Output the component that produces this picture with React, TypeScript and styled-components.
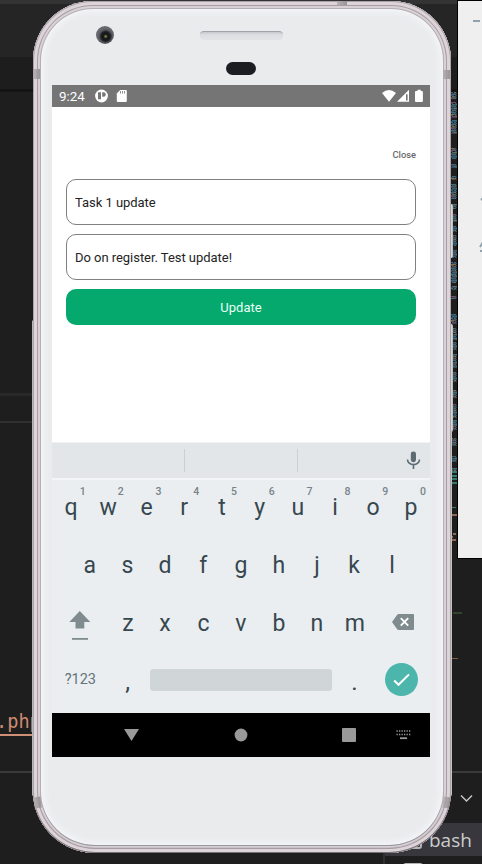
import React from "react";
import styled, { createGlobalStyle } from "styled-components";

const GlobalStyle = createGlobalStyle`
  *, *::before, *::after { box-sizing: border-box; }
  body { margin: 0; background: #1e1e1e; }
  button { border: 0; padding: 0; background: none; font: inherit; color: inherit; }
`;

/* ---------- Desktop behind the emulator ---------- */

const Desktop = styled.div`
  position: relative;
  width: 482px;
  height: 864px;
  overflow: hidden;
  background: #1e1e1e;
  font-family: Roboto, "Noto Sans", sans-serif;
`;

const Band = styled.div<{ $h: number; $c: string }>`
  height: ${(p) => p.$h}px;
  background: ${(p) => p.$c};
`;

const EditorFragment = styled.div`
  position: absolute;
  left: -4px;
  top: 707px;
  width: 60px;
  height: 29px;
  border-bottom: 2px solid #ce9178;
  color: #ce8b70;
  font: 18.6px/29px "DejaVu Sans Mono", "Liberation Mono", monospace;
`;

const CodeOverview = styled.svg`
  position: absolute;
  left: 450px;
  top: 92px;
`;

const SideWindow = styled.div`
  position: absolute;
  left: 457px;
  top: 0;
  width: 30px;
  height: 559px;
  border: solid #000;
  border-width: 1px 1px 1px 1px;
  background: #efefef;
`;

const Terminal = styled.div`
  position: absolute;
  left: 383px;
  top: 773px;
  width: 99px;
  height: 91px;
  border-left: 2px solid #303031;
  display: flex;
  flex-direction: column;
  color: #cccccc;
`;

const TerminalHead = styled.div`
  height: 50px;
  flex: none;
  padding: 16px 9px 0;
  display: flex;
  justify-content: flex-end;
`;

const TerminalTab = styled.div<{ $active?: boolean }>`
  height: 33px;
  flex: none;
  padding-left: 18px;
  display: flex;
  align-items: center;
  gap: 7px;
  background: ${(p) => (p.$active ? "#37373d" : "transparent")};
  font: 19px "Open Sans", "Noto Sans", sans-serif;
`;

const ShellIcon = styled.span`
  width: 19px;
  height: 19px;
  border: 2px solid #b4b4b4;
  border-radius: 3px;
`;

/* ---------- Phone ---------- */

const Phone = styled.div`
  position: absolute;
  left: 33px;
  top: 1px;
  width: 418px;
  height: 852px;
  padding: 84px 21px 96px 19px;
  border-radius: 60px 60px 62px 62px;
  background: #eaebed;
  box-shadow:
    inset 0 -1px 0 #777075,
    inset 0 0 0 1px #aaa2a7,
    inset 0 0 0 4px #ddd4d9,
    inset 0 -3px 0 2px #a69ca1,
    inset 0 0 0 5px #a79ea3,
    inset 0 -1px 0 5px #c9c1c6,
    inset 0 0 0 7px #d9d1d6,
    inset 0 -1px 0 7px #96979c,
    inset 0 0 0 8px #b4afb4,
    inset 0 0 7px 10px #f6f7f9;
`;

const SideButton = styled.div<{ $x: number; $y: number; $w: number; $h: number }>`
  position: absolute;
  left: ${(p) => p.$x}px;
  top: ${(p) => p.$y}px;
  width: ${(p) => p.$w}px;
  height: ${(p) => p.$h}px;
  border-radius: 2px;
  background: linear-gradient(90deg, #a5a5a5, #dfdfdc 50%, #b4b4b2);
`;

const Antenna = styled.div<{ $x: number; $y: number; $w: number; $h: number; $r?: number }>`
  position: absolute;
  left: ${(p) => p.$x}px;
  top: ${(p) => p.$y}px;
  width: ${(p) => p.$w}px;
  height: ${(p) => p.$h}px;
  transform: rotate(${(p) => p.$r ?? 0}deg);
  background: linear-gradient(90deg, #b2abae, #8f898c);
  opacity: 0.85;
`;

const Camera = styled.div`
  position: absolute;
  left: 96px;
  top: 26px;
  width: 18px;
  height: 18px;
  border-radius: 50%;
  background: radial-gradient(circle at 54% 58%, #706b32 0 1px, #17191d 2px 4px, #25272d 5px, #55575c 6.5px, #66686d 8px);
`;

const Speaker = styled.div`
  position: absolute;
  left: 200px;
  top: 31px;
  width: 83px;
  height: 9px;
  border-radius: 4px;
  border-top: 1px solid #a0a3aa;
  background: linear-gradient(#c6c8cf, #dddee2 35%, #e2e3e7);
`;

const Sensor = styled.div`
  position: absolute;
  left: 226px;
  top: 62px;
  width: 30px;
  height: 13px;
  border-radius: 7px;
  background: #1b1d22;
`;

const Screen = styled.div`
  width: 378px;
  height: 672px;
  display: flex;
  flex-direction: column;
  background: #fff;
`;

const StatusBar = styled.header`
  height: 22px;
  flex: none;
  padding: 0 7px;
  display: flex;
  align-items: center;
  background: #757575;
  color: #fff;
  font-size: 13.4px;
`;

const StatusIcons = styled.div<{ $right?: boolean }>`
  display: flex;
  align-items: center;
  margin-left: ${(p) => (p.$right ? "auto" : "10px")};
`;

const Form = styled.main`
  flex: 1;
  padding: 42px 14px 0;
  display: flex;
  flex-direction: column;
`;

const CloseLink = styled.button`
  align-self: flex-end;
  height: 12px;
  margin-bottom: 18px;
  color: #68686a;
  font-size: 9.3px;
  font-weight: 500;
  line-height: 12px;
`;

const Field = styled.div`
  height: 46px;
  margin-bottom: 9px;
  padding: 0 8px;
  border: 1px solid #808080;
  border-radius: 10px;
  color: #242424;
  font-size: 13px;
  letter-spacing: -0.04px;
  line-height: 45px;
`;

const Submit = styled.button`
  height: 36px;
  border-radius: 10px;
  background: #05a96e;
  color: #e9fff5;
  font-size: 13px;
`;

/* ---------- Keyboard ---------- */

const Keyboard = styled.section`
  height: 271px;
  flex: none;
  border-top: 1px solid #f0f1f2;
  background: #eaeef1;
  color: #37474f;
`;

const Suggestions = styled.div`
  height: 37px;
  padding: 6px 0;
  display: grid;
  grid-template-columns: 133px 113px 1fr;
  background: #e2e6e9;
  border-bottom: 2px solid #f2f4f5;
`;

const Suggestion = styled.div`
  border-right: 1px solid #cbd0d3;
  height: 23px;
`;

const MicSlot = styled.div`
  display: flex;
  justify-content: flex-end;
  align-items: center;
  padding: 0 9px 2px 0;
`;

const KeyRow = styled.div<{ $inset?: number }>`
  height: 57.8px;
  display: flex;
  padding: 0 ${(p) => p.$inset ?? 0}px;
`;

const Key = styled.button<{ $w?: number; $size?: number; $color?: string; $drop?: number }>`
  position: relative;
  width: ${(p) => p.$w ?? 37.8}px;
  height: 53px;
  display: flex;
  align-items: center;
  justify-content: center;
  padding-top: ${(p) => p.$drop ?? 0}px;
  font-size: ${(p) => p.$size ?? 24.5}px;
  color: ${(p) => p.$color ?? "inherit"};
`;

const Letter = styled.span`
  transform: scaleX(0.94);
`;

const Hint = styled.sup`
  position: absolute;
  right: 4px;
  top: 5px;
  color: #78848a;
  font-size: 10.5px;
  font-weight: 500;
  line-height: 13px;
`;

const SpaceBar = styled.span`
  width: 182px;
  height: 22px;
  border-radius: 3px;
  background: #d0d5d8;
`;

const Confirm = styled.span`
  width: 33px;
  height: 33px;
  border-radius: 50%;
  display: grid;
  place-items: center;
  background: #4db6ac;
`;

const NavBar = styled.nav`
  height: 44px;
  flex: none;
  padding-left: 71px;
  display: grid;
  grid-template-columns: 111px 108px 54px 1fr;
  align-items: center;
  background: #000;
`;

const codeColors = ["#3c6b84", "#466c86", "#77764f", "#724c70", "#35777c", "#4c5b69", "#2f6a82"];

/* [first line, line count] of each block of code, in pixels */
const codeBlocks = [
  [0, 7], [10, 16], [28, 14], [56, 11], [72, 4], [84, 4], [92, 15], [112, 5],
  [122, 8], [134, 6], [143, 11], [158, 8], [170, 14], [182, 9], [194, 4],
  [204, 3], [222, 10], [236, 12], [250, 8], [262, 14], [280, 10], [298, 8],
  [312, 14], [328, 10], [346, 8], [364, 6], [376, 5],
];

const CodeMap = () => (
  <CodeOverview width="7" height="460" shapeRendering="crispEdges">
    {codeBlocks.flatMap(([start, count], b) =>
      Array.from({ length: count }, (_, i) => (
        <g key={`${b}-${i}`} opacity={i % 2 ? 0.6 : 0.95}>
          <rect x={(i * 5 + b) % 3} y={start + i} width={3 + ((i * 3 + b) % 4)} height="1" fill={codeColors[(b * 3 + (i >> 1)) % 7]} />
          <rect x={4 + (i % 2)} y={start + i} width="2" height="1" fill={codeColors[(i + b + 2) % 7]} />
        </g>
      )),
    )}
    <path d="M0 380h7M1 384h6M0 387h7M1 391h6" stroke="#347b72" strokeWidth="2" />
    <path d="M1 415h5" stroke="#347b72" />
    <path d="M1 423h6M1 445h2M3 442h3M1 448h5" stroke="#916956" strokeWidth="1.4" />
  </CodeOverview>
);

const StrayCode = styled.svg`
  position: absolute;
  left: 450px;
  top: 605px;
`;

const topRow = "qwertyuiop".split("");
const middleRow = "asdfghjkl".split("");
const bottomRow = "zxcvbnm".split("");

export default function App() {
  return (
    <>
      <GlobalStyle />
      <Desktop>
        <Band $h={4} $c="#333333" />
        <Band $h={53} $c="#252526" />
        <Band $h={32} $c="#1d1d1d" />
        <Band $h={3} $c="#141414" />
        <Band $h={301} $c="#1e1e1e" />
        <Band $h={3} $c="#29292a" />
        <Band $h={25} $c="#1e1e1e" />
        <Band $h={2} $c="#303031" />
        <Band $h={348} $c="#1e1e1e" />
        <Band $h={2} $c="#3a3a3a" />
        <EditorFragment>.php</EditorFragment>
        <CodeMap />
        <StrayCode width="14" height="60">
          <path d="M3 8h9" stroke="#466a3c" />
          <path d="M1 53.5h7" stroke="#845945" />
          <path d="M1 22l1 1M1 36l1 1" stroke="#666" />
        </StrayCode>
        <SideWindow>
          <svg width="24" height="556" fill="none" stroke="#90a2ad" strokeWidth="2">
            <path d="M15 20h7" />
            <path d="M23 199l2-2M22 246l3-5M22 250h3" />
          </svg>
        </SideWindow>
        <Terminal>
          <TerminalHead>
            <svg width="13" height="20" fill="none" stroke="#c5c5c5" strokeWidth="1.5">
              <path d="M1 6.5l5.5 5.5L12 6.5" />
            </svg>
          </TerminalHead>
          <TerminalTab $active>
            <ShellIcon />
            bash
          </TerminalTab>
          <TerminalTab>
            <svg width="22" height="20" fill="none" stroke="#b4b4b4" strokeWidth="2">
              <rect x="1" y="1" width="18" height="20" rx="2" />
            </svg>
          </TerminalTab>
        </Terminal>

        <SideButton $x={449} $y={204} $w={4} $h={54} />
        <SideButton $x={449} $y={324} $w={4} $h={108} />
        <SideButton $x={32} $y={320} $w={3} $h={476} />
        <SideButton $x={449} $y={430} $w={2.5} $h={366} />

        <Phone>
          <Screen>
            <StatusBar>
              9:24
              <StatusIcons>
                <svg width="33" height="14" viewBox="0 0 33 14">
                  <circle cx="6.5" cy="7" r="6.4" fill="#fff" />
                  <path d="M3 3.2h3v7H3zM7.2 3.2h1.3a2.2 2.2 0 0 1 0 4.6H7.2z" fill="#757575" />
                  <path d="M25.2 1h5.6q1 0 1 1v10q0 1-1 1h-8q-1 0-1-1V4.4z" fill="#fff" />
                  <path d="M25.5 2v2.6M27.5 2v2.6M29.5 2v2.6" stroke="#757575" strokeWidth="0.8" />
                </svg>
              </StatusIcons>
              <StatusIcons $right>
                <svg width="41" height="14" viewBox="0 0 41 14">
                  <path d="M0 4Q7-1.8 14 4L7 12.8z" fill="#fff" />
                  <path d="M27 .8V12.8H15z" fill="#fff" />
                  <path d="M24 5.2h1.6v6.2H24z" fill="#757575" />
                  <path d="M35.5.7h3.3V2h1.1q1 0 1 1v9q0 1-1 1H34q-1 0-1-1V3q0-1 1-1h1.5z" fill="#fff" />
                </svg>
              </StatusIcons>
            </StatusBar>

            <Form>
              <CloseLink>Close</CloseLink>
              <Field>Task 1 update</Field>
              <Field>Do on register. Test update!</Field>
              <Submit>Update</Submit>
            </Form>

            <Keyboard>
              <Suggestions>
                <Suggestion />
                <Suggestion />
                <MicSlot>
                  <svg width="15" height="18" viewBox="0 0 15 18" fill="none" stroke="#5c6b72">
                    <rect x="4.8" y="0.6" width="5.2" height="10.6" rx="2.4" fill="#5c6b72" stroke="none" />
                    <path d="M1.5 8.4a6 5.2 0 0 0 12 0M7.5 13.8V18" strokeWidth="1.6" />
                  </svg>
                </MicSlot>
              </Suggestions>
              <KeyRow>
                {topRow.map((k, i) => (
                  <Key key={k}>
                    <Letter>{k}</Letter>
                    <Hint>{(i + 1) % 10}</Hint>
                  </Key>
                ))}
              </KeyRow>
              <KeyRow $inset={18.9}>
                {middleRow.map((k) => (
                  <Key key={k} $drop={1}><Letter>{k}</Letter></Key>
                ))}
              </KeyRow>
              <KeyRow>
                <Key $w={56.7} $drop={7} aria-label="Shift">
                  <svg width="26" height="34" viewBox="0 0 26 34" fill="#7f8b8f">
                    <path d="M12.8 2L23.3 13H17.3V19.5H8.5V13H2.3z" />
                    <path d="M5 29h16v1.8H5z" />
                  </svg>
                </Key>
                {bottomRow.map((k) => (
                  <Key key={k} $drop={1}><Letter>{k}</Letter></Key>
                ))}
                <Key $w={56.7} aria-label="Backspace">
                  <svg width="25" height="16" viewBox="-3 0 25 16">
                    <path d="M6.5 0H21q1 0 1 1v14q0 1-1 1H6.5Q5.7 16 5 15L0 8 5 1q.7-1 1.5-1z" fill="#7f8b8f" />
                    <path d="M8.8 4.2l7.4 7.4m0-7.4l-7.4 7.4" stroke="#fff" strokeWidth="1.9" />
                  </svg>
                </Key>
              </KeyRow>
              <KeyRow>
                <Key $w={56.7} $size={14.5} $color="#64737a">?123</Key>
                <Key $drop={4}>,</Key>
                <Key $w={189} aria-label="Space"><SpaceBar /></Key>
                <Key $drop={4}>.</Key>
                <Key $w={56.7} aria-label="Done">
                  <Confirm>
                    <svg width="17" height="14" fill="none" stroke="#fff" strokeWidth="2">
                      <path d="M1.2 7.5l4.3 4.3L16 1.4" />
                    </svg>
                  </Confirm>
                </Key>
              </KeyRow>
            </Keyboard>

            <NavBar>
              <svg width="17" height="14"><path d="M1 1h15L8.5 13z" fill="#999" /></svg>
              <svg width="14" height="14"><circle cx="7" cy="7" r="6.4" fill="#999" /></svg>
              <svg width="14" height="14"><rect width="14" height="14" rx="1" fill="#999" /></svg>
              <svg width="15" height="10" fill="none" stroke="#9a9a9a">
                <path d="M.5 1h14M.5 4.5h14" strokeWidth="1.5" strokeDasharray="1.3 1.2" />
                <path d="M4 8.2h7" strokeWidth="1.8" />
              </svg>
            </NavBar>
          </Screen>
        </Phone>

        <Camera />
        <Speaker />
        <Sensor />
        <Antenna $x={34} $y={69} $w={6} $h={10} />
        <Antenna $x={443} $y={70} $w={7} $h={9} />
        <Antenna $x={337} $y={1} $w={10} $h={4} />
        <Antenna $x={34} $y={797} $w={7} $h={11} $r={-8} />
        <Antenna $x={443} $y={797} $w={7} $h={11} $r={8} />
      </Desktop>
    </>
  );
}
